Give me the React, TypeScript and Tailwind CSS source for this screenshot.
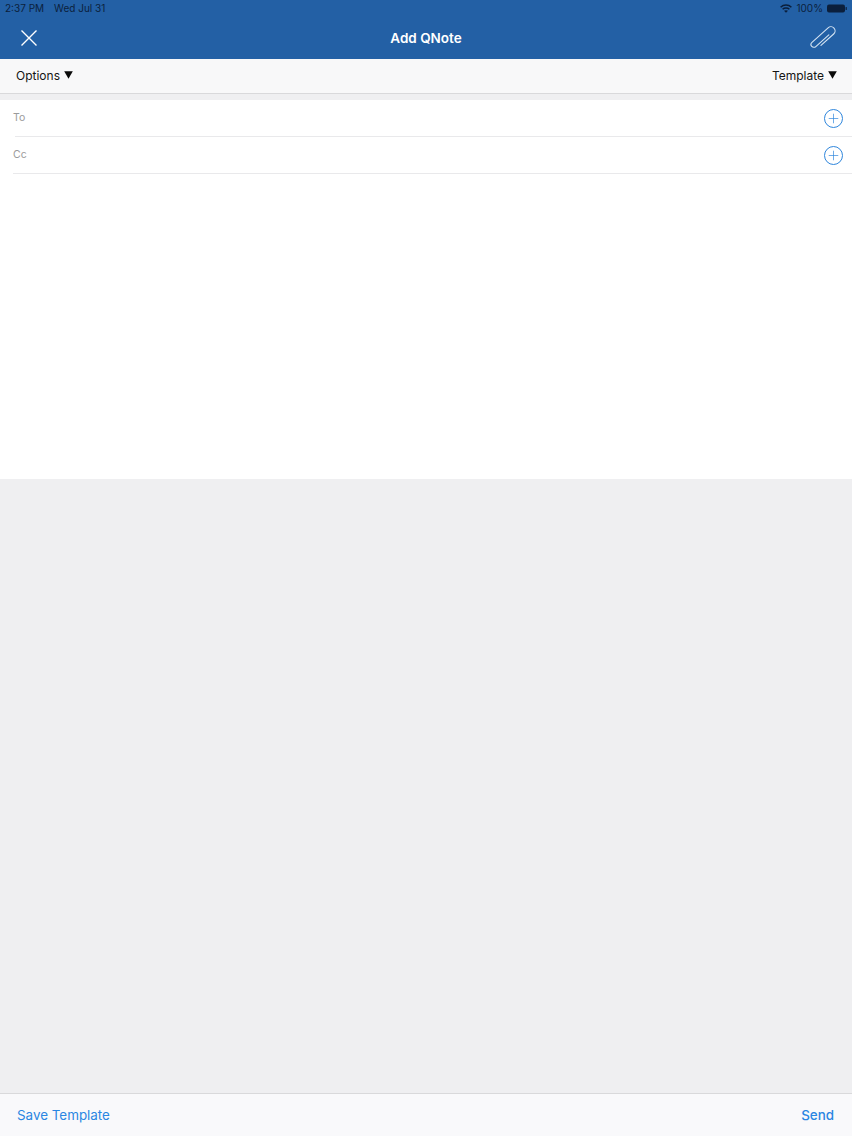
import { Plus } from 'lucide-react'

const sans = "font-['Inter','Liberation_Sans',sans-serif]"

function Caret() {
  return (
    <svg width="9" height="8" viewBox="0 0 9 8" className="mb-[3px] ml-[4px]">
      <path d="M0.2 0.3 H8.8 L4.5 7.8 Z" fill="#0a0a0a" />
    </svg>
  )
}

function AddRow({ label, inset }: { label: string; inset: string }) {
  return (
    <div className="relative flex h-[37px] items-center justify-between pb-[1px] pl-[13px] pr-[9px]">
      <span className="text-[10.5px] text-[#9b9b9b]">{label}</span>
      <span className="flex h-[19px] w-[19px] items-center justify-center rounded-full border border-[#2f86dc]">
        <Plus size={15} strokeWidth={1.1} color="#2f86dc" />
      </span>
      <div className={`absolute right-0 bottom-0 h-px bg-[#e9e9eb] ${inset}`} />
    </div>
  )
}

export default function App() {
  return (
    <div className={`flex h-[1136px] w-[852px] flex-col overflow-hidden bg-[#efeff1] ${sans}`}>
      {/* status bar + nav */}
      <header className="h-[59px] shrink-0 bg-[#2360a5]">
        <div className="flex h-[17px] items-center justify-between pl-[5px] pr-[5px] text-[10px] text-[#0b1f3c]">
          <div className="flex gap-[10px]">
            <span>2:37 PM</span>
            <span>Wed Jul 31</span>
          </div>
          <div className="flex items-center gap-[4px]">
            <svg width="12" height="9" viewBox="0 0 12 9" fill="none" stroke="#0b1f3c" strokeWidth="1.5">
              <path d="M0.6 3.2 C3.6 0.2 8.4 0.2 11.4 3.2" />
              <path d="M2.6 5.2 C4.4 3.5 7.6 3.5 9.4 5.2" />
              <path d="M6 8.8 L4 6.8 C5.1 5.9 6.9 5.9 8 6.8 Z" fill="#0b1f3c" stroke="none" />
            </svg>
            <span>100%</span>
            <svg width="20" height="9" viewBox="0 0 20 9">
              <rect x="0" y="0.5" width="18" height="8" rx="2" fill="#0b1f3c" />
              <rect x="18.6" y="3" width="1.2" height="3" rx="0.5" fill="#0b1f3c" />
            </svg>
          </div>
        </div>
        <div className="flex h-[42px] items-center px-[16px]">
          <div className="flex flex-1 justify-start">
            <svg width="18" height="18" viewBox="0 0 18 18" stroke="#fff" strokeWidth="1.4" fill="none" className="ml-[4px]">
              <path d="M1.5 1.5 L16.5 16.5 M16.5 1.5 L1.5 16.5" />
            </svg>
          </div>
          <span className="text-[13.5px] font-semibold text-white">Add QNote</span>
          <div className="flex flex-1 justify-end">
            <svg width="26" height="24" viewBox="-14 -13 28 26" fill="none" stroke="#d5e4f3" strokeWidth="1.2" strokeLinecap="round" strokeLinejoin="round">
              <path transform="rotate(-42)" d="M-7 4.5 L11.5 4.5 A4.5 4.5 0 0 0 11.5 -4.5 L-12 -4.5 A3.1 3.1 0 0 0 -12 1.7 L7 1.7" />
            </svg>
          </div>
        </div>
      </header>

      {/* options bar */}
      <div className="flex h-[35px] shrink-0 items-center justify-between border-b border-[#d9d9db] bg-[#f8f8f9] pl-[16px] pr-[15px] text-[12px] text-[#141414]">
        <div className="flex items-center">
          <span>Options</span>
          <Caret />
        </div>
        <div className="flex items-center">
          <span>Template</span>
          <Caret />
        </div>
      </div>
      <div className="h-[6px] shrink-0 bg-[#efeff1]" />

      {/* compose area */}
      <section className="h-[379px] shrink-0 bg-white">
        <AddRow label="To" inset="left-[15px]" />
        <AddRow label="Cc" inset="left-[13px]" />
      </section>

      <div className="flex-1" />

      {/* bottom bar */}
      <footer className="flex h-[43px] shrink-0 items-center justify-between border-t border-[#d9d9db] bg-[#f9f9fb] pl-[17px] pr-[18px] text-[13.4px] text-[#2a86e2]">
        <span>Save Template</span>
        <span className="font-medium">Send</span>
      </footer>
    </div>
  )
}
